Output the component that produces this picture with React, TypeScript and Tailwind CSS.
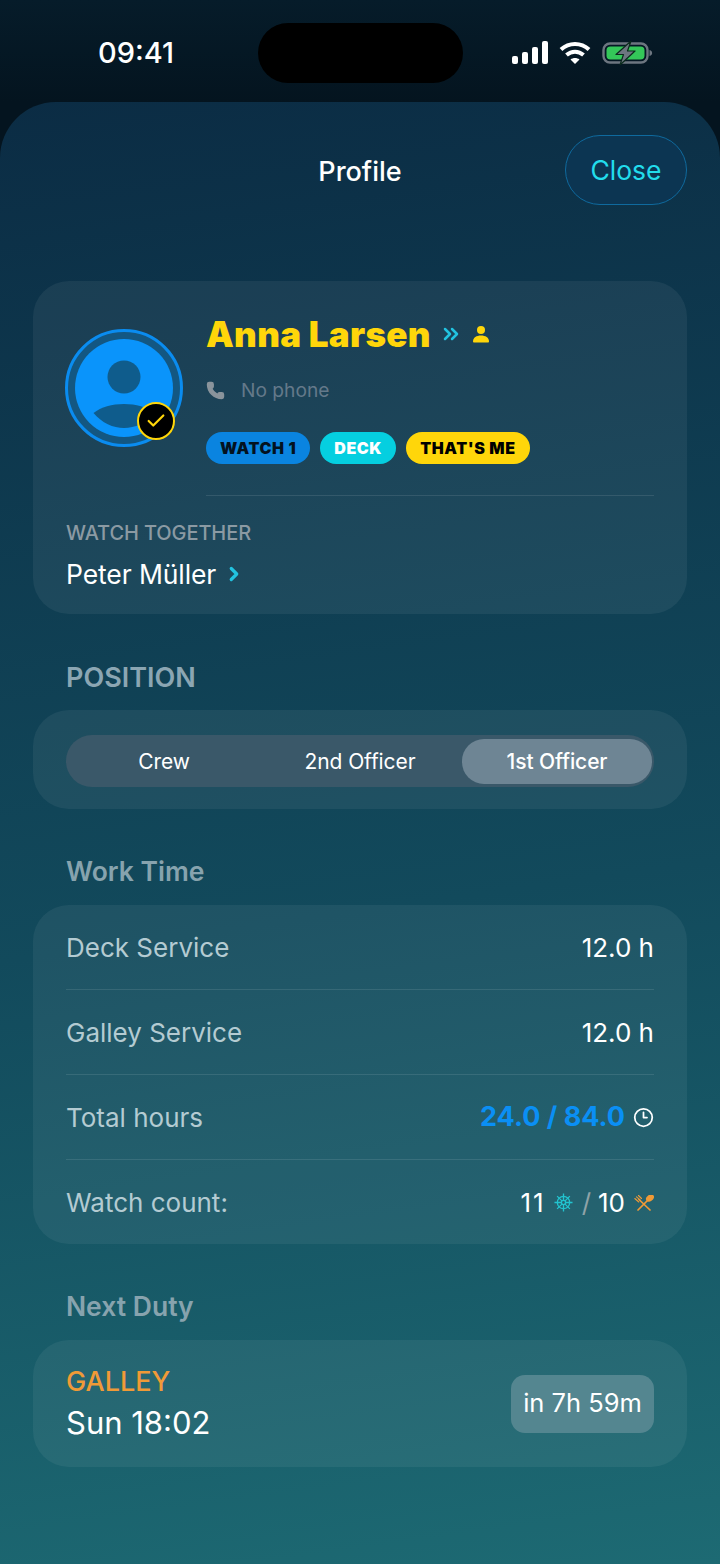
import { Check, ChevronRight, ChevronsRight, Clock3, Phone } from 'lucide-react';

const Battery = () => (
  <svg width="52" height="24" viewBox="0 0 52 24" fill="none">
    <rect x="1.500" y="2.500" width="44" height="19" rx="6.500" stroke="#6d7680" strokeWidth="2.400" />
    <rect x="4.500" y="5.500" width="38" height="13" rx="4" fill="#34c759" />
    <path d="M47.500 9c2 .5 2.600 1.600 2.600 3s-.6 2.500-2.600 3z" fill="#6d7680" />
    <path d="M29 0 14 13.500h7.500L18 24l15-14h-7.500z" fill="#6d7680" stroke="#0b2a1c" strokeWidth="1.200" strokeLinejoin="round" />
  </svg>
);

const Signal = () => (
  <svg width="36" height="24" viewBox="0 0 36 24" fill="#fff">
    <rect x="0" y="15" width="6" height="8" rx="2" />
    <rect x="10" y="11" width="6" height="12" rx="2" />
    <rect x="20" y="6" width="6" height="17" rx="2" />
    <rect x="30" y="0" width="6" height="23" rx="2" />
  </svg>
);

const Wifi = () => (
  <svg width="32" height="24" viewBox="0 0 32 24" fill="none" stroke="#fff" strokeWidth="4">
    <path d="M2 8.500c8-7.500 20-7.500 28 0" />
    <path d="M7.500 14c5-4.500 12-4.500 17 0" />
    <path d="M11.500 18.500 16 23l4.500-4.500c-2.500-2-6.500-2-9 0z" fill="#fff" stroke="none" />
  </svg>
);

const Avatar = () => (
  <div className="relative w-[118px] h-[118px] shrink-0 -ml-[1px]">
    <svg width="118" height="118" viewBox="0 0 118 118">
      <circle cx="59" cy="59" r="57.500" fill="#135782" stroke="#0a8cf0" strokeWidth="3" />
      <circle cx="59" cy="59" r="49" fill="#0a94fb" />
      <circle cx="59" cy="48" r="16.500" fill="#0f5c8c" />
      <path d="M28.500 84C36 78 47 75 59 75s23 3 30.500 9C81 94 70 99 59 99s-22-5-30.500-15z" fill="#0f5c8c" />
    </svg>
    <div className="absolute left-[72px] top-[73px] w-[38px] h-[38px] rounded-full bg-black border-2 border-[#ffd60a] flex items-center justify-center">
      <Check size={22} color="#ffd60a" strokeWidth={2.400} />
    </div>
  </div>
);

const Tag = ({ label, bg, fg }: { label: string; bg: string; fg: string }) => (
  <span className={`h-8 px-[14px] rounded-full flex items-center text-[16px] font-black tracking-[0.6px] ${bg} ${fg}`}>{label}</span>
);

const PersonSolid = () => (
  <svg width="18" height="18" viewBox="0 0 18 18" fill="#ffd60a">
    <circle cx="9" cy="5" r="4" />
    <path d="M1 16.500C1 12.500 4.500 10.500 9 10.500s8 2 8 6c0 .5-.5 1-1 1H2c-.5 0-1-.5-1-1z" />
  </svg>
);

const Wheel = () => (
  <svg width="19" height="19" viewBox="0 0 20 20" fill="none" stroke="#22c3cf" strokeWidth="1.400">
    <circle cx="10" cy="10" r="6.500" />
    <circle cx="10" cy="10" r="2.200" />
    <path d="M10 0.500v7M10 12.500v7M0.500 10h7M12.500 10h7M3.300 3.300l5 5M11.700 11.700l5 5M16.700 3.300l-5 5M8.300 11.700l-5 5" />
  </svg>
);

const Cutlery = () => (
  <svg width="20" height="16" viewBox="0 0 20 16" fill="none" stroke="#f09a37" strokeWidth="1.700" strokeLinecap="round">
    <path d="M5 4.500 16 15" />
    <path d="M14 5 4 15" />
    <ellipse cx="16" cy="3" rx="3.500" ry="2.300" transform="rotate(-35 16 3)" fill="#f09a37" />
    <path d="M0.800 3.500l4 3.500M2.500 1.800l4 3.500M4.500 0.500l3 3" strokeWidth="1.100" />
  </svg>
);

const Row = ({ label, last, children }: { label: string; last?: boolean; children: React.ReactNode }) => (
  <div className={`h-[85px] flex items-center justify-between ${last ? '' : 'border-b border-white/10'}`}>
    <span className="text-[26px] text-[#b4cbd2]">{label}</span>
    <div className="flex items-center text-[26px] text-white">{children}</div>
  </div>
);

const cardClass = 'mx-[33px] rounded-[36px] bg-white/[0.06]';

export default function App() {
  return (
    <div
      className="w-[720px] h-[1564px] overflow-hidden bg-[#04141f] text-white"
      style={{ fontFamily: 'Inter, "Noto Sans", sans-serif' }}
    >
      <div className="relative h-[102px] flex items-center justify-between pl-[98px] pr-[66px] pt-[4px] bg-gradient-to-b from-[#061c2a] to-[#04141f]">
        <span className="text-[29px] font-medium">09:41</span>
        <div className="absolute left-[258px] top-[23px] w-[205px] h-[60px] rounded-[30px] bg-black" />
        <div className="flex items-center gap-[11px]">
          <Signal />
          <Wifi />
          <Battery />
        </div>
      </div>

      <div className="h-[1462px] rounded-t-[56px] bg-[linear-gradient(172deg,#0b2c44_0%,#124a5c_55%,#1d6a73_100%)]">
        <div className="relative h-[179px]">
          <div className="pt-[51px] text-center text-[27px] font-medium leading-[38px]">Profile</div>
          <button className="absolute right-[33px] top-[33px] w-[122px] h-[70px] pt-[2px] rounded-[35px] border border-[#0f6a9e] bg-[#0c3552] text-[26.500px] text-[#22dcec]">
            Close
          </button>
        </div>

        <section className={`${cardClass} h-[333px] px-[33px] pt-[37px]`}>
          <div className="flex gap-[23px] pt-[11px] h-[177px]">
            <Avatar />
            <div className="flex-1 -mt-[20px]">
              <div className="flex items-center h-[50px]">
                <span className="text-[35px] font-black text-[#ffd60a] tracking-[0.3px]">Anna Larsen</span>
                <ChevronsRight size={24} color="#22c3e0" strokeWidth={2.500} className="ml-[8px]" />
                <span className="ml-[9px]"><PersonSolid /></span>
              </div>
              <div className="flex items-center h-[34px] mt-[14px] text-[19.200px] text-[#64798a]">
                <Phone size={19} color="#8a949c" fill="#8a949c" className="mr-[16px]" />
                No phone
              </div>
              <div className="flex gap-[10px] mt-[25px]">
                <Tag label="WATCH 1" bg="bg-[#0a84e0]" fg="text-[#03121f]" />
                <Tag label="DECK" bg="bg-[#05cfe0]" fg="text-white" />
                <Tag label="THAT'S ME" bg="bg-[#ffd60a]" fg="text-black" />
              </div>
            </div>
          </div>
          <div className="ml-[140px] border-t border-white/10" />
          <div className="mt-[24px] text-[20px] font-medium text-[#8b9aa3] leading-[26px] tracking-[-0.1px]">WATCH TOGETHER</div>
          <div className="mt-[10px] flex items-center text-[26.500px] leading-[36px] tracking-[-0.1px]">
            Peter Müller
            <ChevronRight size={22} color="#22c3e0" strokeWidth={3.500} className="ml-[7px]" />
          </div>
        </section>

        <div className="pl-[66px] mt-[46px] h-[36px] text-[27px] leading-[36px] font-semibold text-[#8ba6b3]">POSITION</div>
        <section className={`${cardClass} mt-[14px] h-[99px] px-[33px] pt-[25px]`}>
          <div className="h-[52px] rounded-[26px] bg-[#3a5869] grid grid-cols-3 items-center text-[21px] tracking-[-0.1px]">
            <div className="text-center pt-[2px]">Crew</div>
            <div className="text-center pt-[2px]">2nd Officer</div>
            <div className="ml-[4px] mr-[2px] h-[45px] pt-[2px] rounded-[22px] bg-[#6e8594] flex items-center justify-center font-medium">1st Officer</div>
          </div>
        </section>

        <div className="pl-[66px] mt-[44px] h-[36px] text-[26.500px] leading-[36px] font-semibold text-[#87a3ae]">Work Time</div>
        <section className={`${cardClass} mt-[16px] h-[339px] px-[33px]`}>
          <Row label="Deck Service">12.0 h</Row>
          <Row label="Galley Service">12.0 h</Row>
          <Row label="Total hours">
            <span className="font-bold text-[#0a8ff5] text-[27px] mt-[1px]">24.0 / 84.0</span>
            <Clock3 size={21} className="ml-[8px]" />
          </Row>
          <Row label="Watch count:" last>
            <span className="tracking-[2px]">11</span>
            <span className="ml-[8px]"><Wheel /></span>
            <span className="ml-[9px] mr-[7px] text-[#8fa3a8]">/</span>
            10
            <span className="ml-[9px]"><Cutlery /></span>
          </Row>
        </section>

        <div className="pl-[66px] mt-[44px] h-[36px] text-[26.500px] leading-[36px] font-semibold text-[#87a3ae]">Next Duty</div>
        <section className={`${cardClass} mt-[16px] h-[127px] pl-[33px] pr-[33px] flex items-center justify-between`}>
          <div className="pt-[4px]">
            <div className="text-[27px] font-medium text-[#f09a37] leading-[36px] -mt-[2px]">GALLEY</div>
            <div className="text-[31px] leading-[44px] mt-[1px]">Sun 18:02</div>
          </div>
          <div className="w-[143px] h-[58px] rounded-[14px] bg-[#548690] flex items-center justify-center text-[25.500px]">in 7h 59m</div>
        </section>
      </div>
    </div>
  );
}
